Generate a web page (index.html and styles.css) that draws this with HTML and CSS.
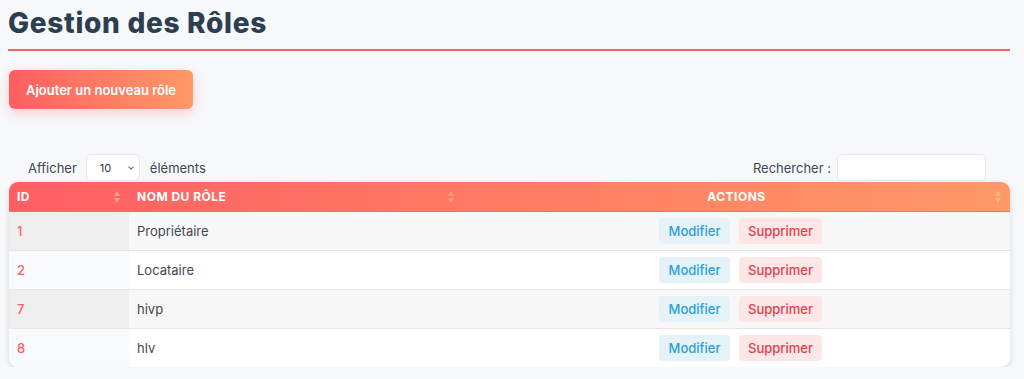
FILE: index.html
```html
<!DOCTYPE html>
<html>
<head>
<link rel="stylesheet" href="styles.css">
</head>

<body>
    <div class="page">
        <h1 class="page-title">Gestion des Rôles</h1>

        <button class="add-button" type="button">Ajouter un nouveau rôle</button>

        <div class="table-controls">
            <label class="length-control">
                Afficher
                <span class="select-wrap">
                    <select class="length-select">
                        <option>10</option>
                        <option>25</option>
                        <option>50</option>
                    </select>
                </span>
                éléments
            </label>
            <label class="search-control">
                Rechercher :
                <input class="search-input" type="search">
            </label>
        </div>

        <div class="table-wrap">
        <table class="roles-table">
            <thead>
                <tr>
                    <th class="col-id sorted">ID <span class="sort-icon asc"></span></th>
                    <th class="col-name">Nom du rôle <span class="sort-icon"></span></th>
                    <th class="col-actions">Actions <span class="sort-icon"></span></th>
                </tr>
            </thead>
            <tbody id="tableBody"></tbody>
        </table>
        </div>
    </div>

    <script>
        const table = document.getElementById("tableBody")
        const roles = [
            { id: 1, name: 'Propriétaire' },
            { id: 2, name: 'Locataire' },
            { id: 7, name: 'hivp' },
            { id: 8, name: 'hlv' }
        ]

        // one row per role
        roles.forEach(role => {
            let row = table.insertRow();
            let colId = row.insertCell(0);
            colId.className = 'cell-id'
            colId.innerHTML = role.id
            let colName = row.insertCell(1);
            colName.innerHTML = role.name
            let colActions = row.insertCell(2);
            colActions.innerHTML = '<div class="actions">' +
                '<button class="btn-edit" type="button">Modifier</button>' +
                '<button class="btn-delete" type="button">Supprimer</button>' +
                '</div>'
        })
    </script>
</body>

</html>
```

FILE: styles.css
```css
body {
    margin: 0;
    background-color: #f7f8fa;
    font-family: Inter, "Open Sans", sans-serif;
    color: #3d4852;
}

.page {
    padding: 0 14px 0 9px;
}

.page-title {
    margin: 0;
    padding: 6px 0 9px 0;
    font-size: 28px;
    font-weight: 800;
    color: #2c3e50;
    letter-spacing: 0.7px;
    border-bottom: 2px solid #ff5e62;
    margin-left: -1px;
}

.add-button {
    margin-top: 19px;
    height: 39px;
    width: 184px;
    border: 0;
    border-radius: 6px;
    background-image: linear-gradient(90deg, #ff5e62 0%, #ff9966 100%);
    box-shadow: 0 4px 12px rgba(255, 94, 98, 0.28);
    color: #ffffff;
    font-family: Inter, sans-serif;
    font-size: 13px;
    font-weight: 600;
    cursor: pointer;
}

.table-controls {
    display: flex;
    justify-content: space-between;
    align-items: center;
    margin-top: 45px;
    padding: 0 24px 0 19px;
    font-size: 13px;
    color: #3d4852;
}

.length-control,
.search-control {
    display: flex;
    align-items: center;
}

.select-wrap {
    position: relative;
    margin: 0 10px 0 9px;
}

.select-wrap::after {
    content: "";
    position: absolute;
    right: 7px;
    top: 11px;
    width: 3px;
    height: 3px;
    border-right: 1px solid #666;
    border-bottom: 1px solid #666;
    transform: rotate(45deg);
    pointer-events: none;
}

.length-select {
    display: block;
    appearance: none;
    -webkit-appearance: none;
    width: 54px;
    height: 27px;
    border: 1px solid #e6e8eb;
    border-radius: 5px;
    background-color: #ffffff;
    font-family: Inter, sans-serif;
    font-size: 11px;
    padding-left: 13px;
    color: #333;
}

.search-input {
    margin-left: 6px;
    width: 149px;
    height: 27px;
    box-sizing: border-box;
    border: 1px solid #e6e8eb;
    border-radius: 5px;
    background-color: #ffffff;
}

.table-wrap {
    margin-top: 1px;
    border-radius: 9px;
    overflow: hidden;
    box-shadow: 0 2px 6px rgba(0, 0, 0, 0.12);
    background-color: #ffffff;
}

.roles-table {
    width: 100%;
    border-collapse: collapse;
    font-size: 13px;
}

.roles-table thead tr {
    background-image: linear-gradient(90deg, #ff5e62 0%, #ff9966 100%);
    color: #ffffff;
}

.roles-table th {
    position: relative;
    height: 29px;
    padding: 0 8px;
    text-align: left;
    font-size: 12px;
    font-weight: 700;
    text-transform: uppercase;
    letter-spacing: 0.5px;
    border-bottom: 1px solid #f0706a;
}

.roles-table th.col-id {
    width: 104px;
}

.roles-table th.col-name {
    width: 318px;
}

.roles-table th.col-actions {
    text-align: center;
}

.sort-icon {
    position: absolute;
    right: 9px;
    top: 9px;
    width: 6px;
    height: 12px;
    opacity: 0.25;
}

.sort-icon::before,
.sort-icon::after {
    content: "";
    position: absolute;
    left: 0;
    border-left: 3px solid transparent;
    border-right: 3px solid transparent;
}

.sort-icon::before {
    top: 0;
    border-bottom: 5px solid #ffffff;
}

.sort-icon::after {
    bottom: 0;
    border-top: 5px solid #ffffff;
}

.sort-icon.asc {
    opacity: 0.4;
}

.roles-table td {
    height: 38px;
    padding: 0 8px;
    border-bottom: 1px solid #e6e6e6;
    color: #3d4852;
}

.roles-table tbody tr:last-of-type td {
    border-bottom: 0;
}

.roles-table tbody tr:nth-of-type(odd) {
    background-color: #f7f7f7;
}

.roles-table tbody tr:nth-of-type(odd) td.cell-id {
    background-color: #efefef;
}

.roles-table tbody tr:nth-of-type(even) td.cell-id {
    background-color: #f8fafd;
}

.roles-table td.cell-id {
    color: #ff5e62;
    font-weight: 500;
}

.actions {
    display: flex;
    justify-content: center;
    gap: 9px;
    padding-left: 8px;
}

.btn-edit,
.btn-delete {
    height: 26px;
    border: 0;
    border-radius: 4px;
    font-family: Inter, sans-serif;
    font-size: 13px;
    font-weight: 500;
    cursor: pointer;
}

.btn-edit {
    width: 71px;
    background-color: #e5f3f9;
    color: #2b9fd9;
}

.btn-delete {
    width: 83px;
    background-color: #fce6e6;
    color: #e2404f;
}
```
